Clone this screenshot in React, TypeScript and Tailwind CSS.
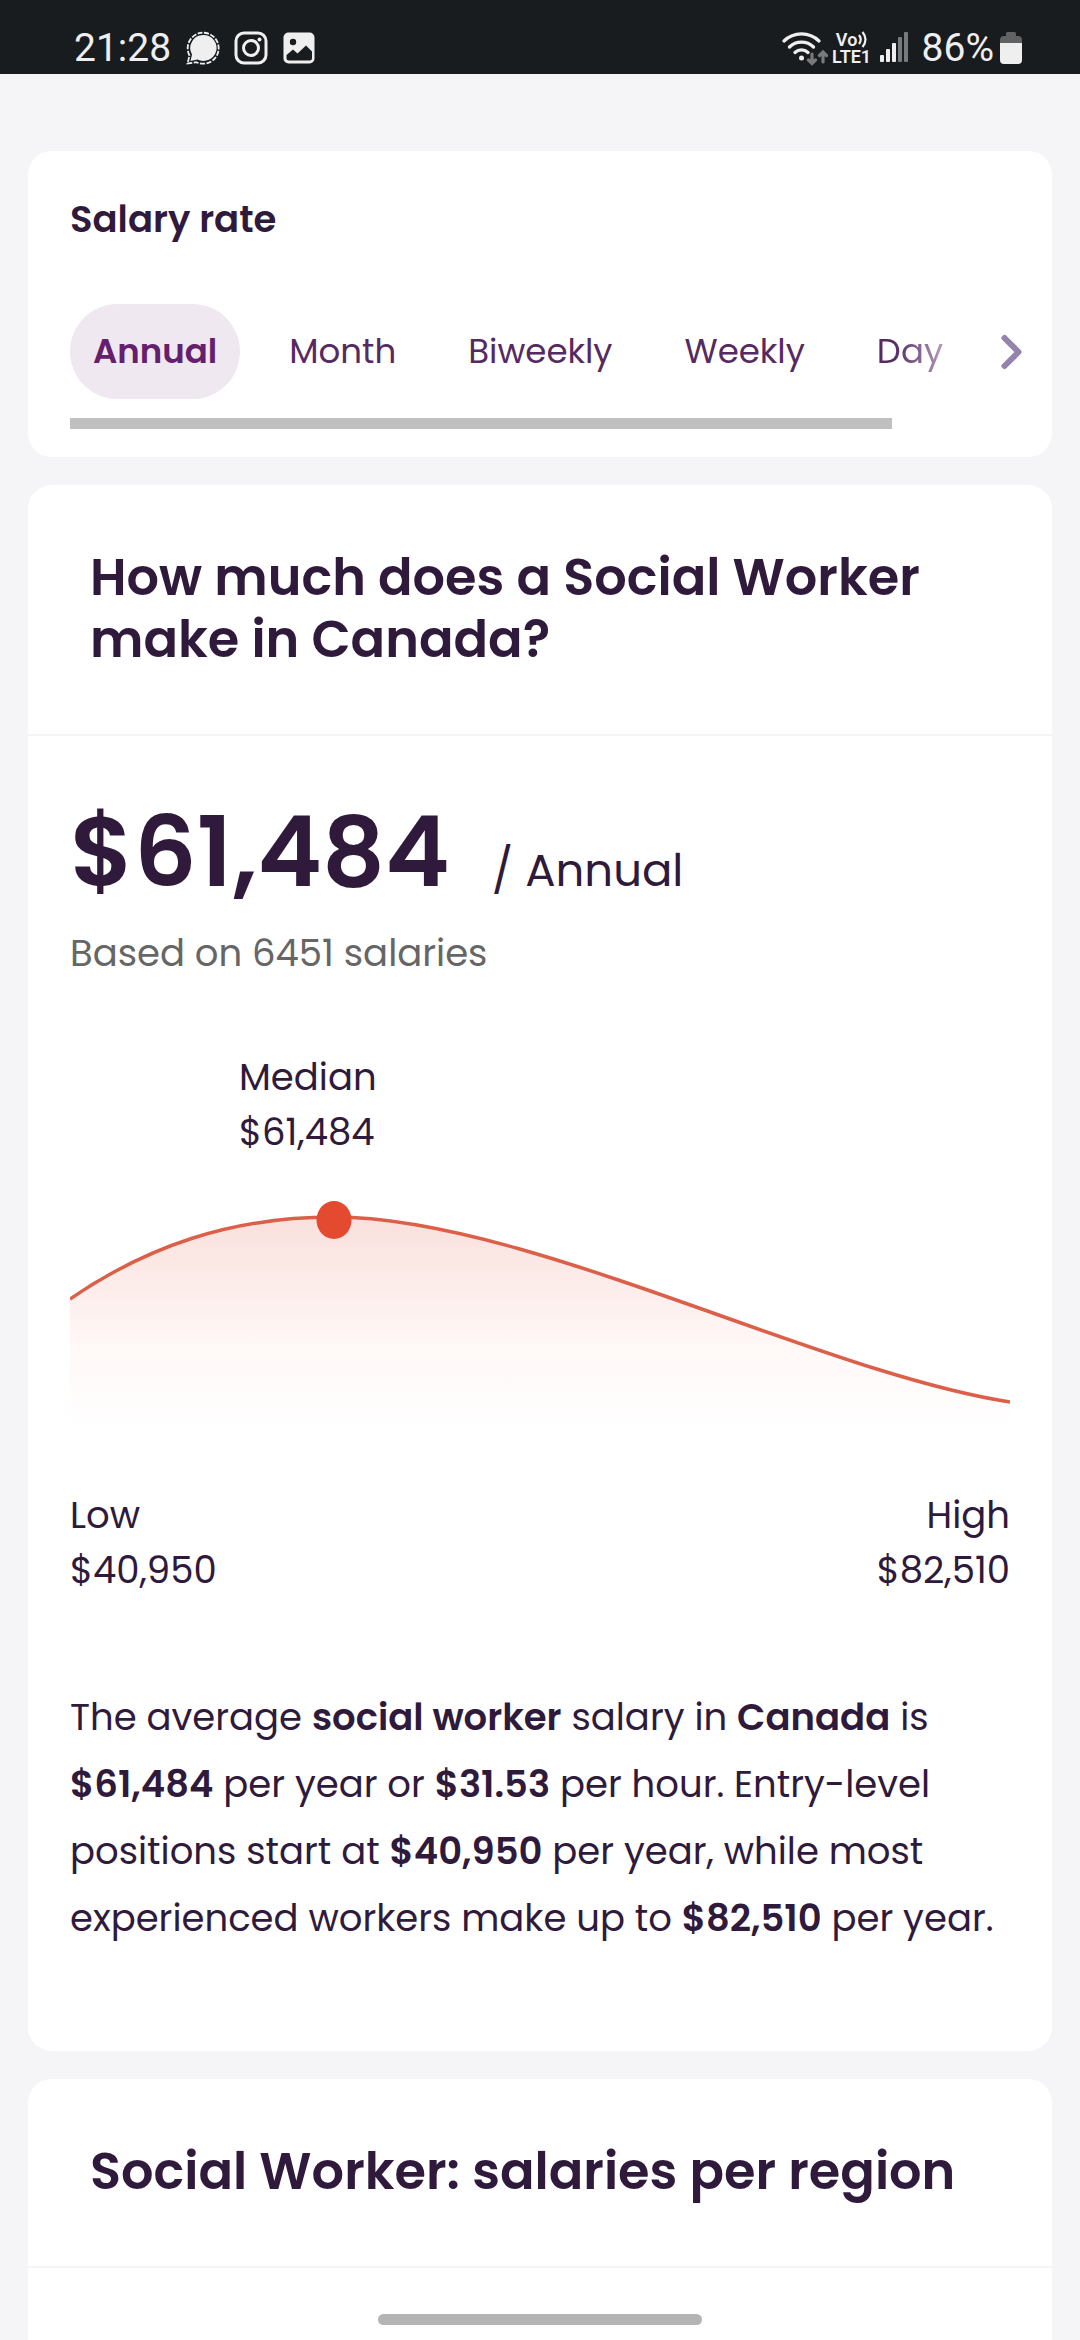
import { useState } from 'react';

const rates = ['Annual', 'Month', 'Biweekly', 'Weekly', 'Day'];

function StatusBar() {
  return (
    <header className="flex h-[74px] items-center justify-between bg-[#191c1f] px-[58px] pt-[22px] font-['Roboto',sans-serif] text-[#efefef]">
      <div className="flex items-center gap-[14px]">
        <span className="w-[98px] pl-4 text-[39px] leading-[48px]">21:28</span>
        {/* Chat bubble */}
        <svg className="ml-4 h-[34px] w-[34px]" viewBox="0 0 34 34" fill="none" stroke="currentColor">
          <path d="M17.500 4a13 13 0 1 1-6 24.500L4.500 30l1.500-6.500A13 13 0 0 1 17.500 4z" fill="currentColor" stroke="none" />
          <path d="M3.500 24.500A15.500 15.500 0 1 1 10.500 31.200L1.500 32.500z" strokeWidth="1.800" strokeDasharray="5 1.500" />
        </svg>
        {/* Camera */}
        <svg className="h-[34px] w-[34px]" viewBox="0 0 34 34" fill="none" stroke="currentColor" strokeWidth="3">
          <rect x="2" y="2" width="30" height="30" rx="8" />
          <circle cx="17" cy="17" r="7.500" />
          <circle cx="25.500" cy="8.500" r="2" fill="currentColor" stroke="none" />
        </svg>
        {/* Gallery */}
        <svg className="h-[34px] w-[34px]" viewBox="0 0 34 34">
          <rect x="1.500" y="1.500" width="31" height="31" rx="5" fill="currentColor" />
          <circle cx="11" cy="11" r="3.200" fill="#191c1f" />
          <path d="M4.500 24l6.500-5.500 4.500 4L24 14.500l6 6V27q0 2.500-2.500 2.500H7Q4.500 29.500 4.500 27z" fill="#191c1f" />
        </svg>
      </div>
      <div className="flex items-center">
        {/* Wi-Fi with traffic arrows */}
        <svg className="h-[36px] w-[46px]" viewBox="0 0 46 36" fill="none" stroke="currentColor" strokeWidth="3.200" strokeLinecap="round">
          <path d="M2 11a25 25 0 0 1 35 0M7.500 17a17 17 0 0 1 24 0M13 22.500a9.500 9.500 0 0 1 13 0" />
          <circle cx="19.500" cy="28" r="2.500" fill="currentColor" stroke="none" />
          <path d="M30 24v9M26.500 30l3.500 3.500 3.500-3.500M41 32v-9M37.500 25.500l3.500-3.500 3.500 3.500" stroke="#77797b" />
        </svg>
        {/* VoLTE */}
        <div className="ml-1 flex w-[40px] flex-col items-center text-[18px] leading-[17px] font-semibold">
          <span className="flex items-center">
            Vo
            <svg className="h-[17px] w-[10px]" viewBox="0 0 10 17" fill="none" stroke="currentColor" strokeWidth="2.200">
              <path d="M2 4q3.500 4.500 0 9M5.500 1q6 7.500 0 15" />
            </svg>
          </span>
          <span>LTE1</span>
        </div>
        <svg className="ml-[8px] h-[34px] w-[28px]" viewBox="0 0 28 34" fill="currentColor">
          <rect x="0" y="24" width="4" height="7" rx="1" />
          <rect x="6" y="18" width="4" height="13" rx="1" />
          <rect x="12" y="12" width="4" height="19" rx="1" />
          <rect x="18" y="6" width="4" height="25" rx="1" fill="#77797b" />
          <rect x="24" y="1" width="4" height="30" rx="1" fill="#77797b" />
        </svg>
        <span className="ml-[14px] text-[39px] leading-[48px]">86%</span>
        <svg className="ml-[6px] h-[32px] w-[22px]" viewBox="0 0 22 32">
          <path d="M6 4V1.500Q6 0 7.500 0h7Q16 0 16 1.500V4h2q4 0 4 4v3H0V8q0-4 4-4z" fill="#606264" />
          <path d="M0 11h22v17q0 4-4 4H4q-4 0-4-4z" fill="currentColor" />
        </svg>
      </div>
    </header>
  );
}

function SalaryCurve() {
  return (
    <svg className="block h-[250px] w-full" viewBox="0 0 940 250" preserveAspectRatio="none">
      <defs>
        <linearGradient id="fade" gradientUnits="userSpaceOnUse" x1="0" y1="26" x2="0" y2="240">
          <stop offset="0" stopColor="#f9e0dc" />
          <stop offset="0.600" stopColor="#fff8f7" />
          <stop offset="1" stopColor="#ffffff" />
        </linearGradient>
      </defs>
      <path d="M0 108C76 56 160 26 264 26C455 26 750 182 940 211V250H0z" fill="url(#fade)" />
      <path d="M0 108C76 56 160 26 264 26C455 26 750 182 940 211" fill="none" stroke="#db5f49" strokeWidth="3.500" />
      <ellipse cx="264" cy="29" rx="17.500" ry="19" fill="#e34a30" />
    </svg>
  );
}

export default function App() {
  const [active, setActive] = useState('Annual');

  return (
    <div className="relative flex min-h-screen flex-col bg-[#f5f5f8] font-['Poppins','Inter',sans-serif] text-[#2f1a3c]">
      <StatusBar />

      <main className="flex flex-1 flex-col gap-7 px-7 pt-[77px]">
        {/* Rate switcher */}
        <section className="rounded-3xl bg-white px-[42px] pt-[41px] pb-7">
          <h2 className="text-[37px] leading-[54px] font-semibold">Salary rate</h2>
          <div className="mt-[58px] -mr-5 flex items-center justify-between">
            <div className="flex min-w-0 flex-1 gap-[26px] overflow-hidden">
              {rates.map((rate) => (
                <button
                  key={rate}
                  onClick={() => setActive(rate)}
                  className={
                    rate === active
                      ? 'h-[95px] rounded-full bg-[#efe8f0] px-[23px] text-[34px] font-semibold text-[#64206c]'
                      : rate === 'Day'
                        ? 'h-[95px] bg-linear-to-r from-[#552a62] from-35% to-[#bfa9c5] to-85% bg-clip-text px-[23px] text-[34px] text-transparent'
                        : 'h-[95px] px-[23px] text-[34px] text-[#552a62]'
                  }
                >
                  {rate}
                </button>
              ))}
            </div>
            <button aria-label="Next rates" className="px-2">
              <svg className="h-9 w-[22px]" viewBox="0 0 22 36" fill="none" stroke="#9484ad" strokeWidth="6" strokeLinecap="round" strokeLinejoin="round">
                <path d="M4.500 4l14 14-14 14" />
              </svg>
            </button>
          </div>
          <div className="mt-[19px] h-[11px] w-[87.400%] bg-[#c0c0c0]" />
        </section>

        {/* Salary summary */}
        <section className="rounded-3xl bg-white">
          <h1 className="border-b-2 border-[#f5f5f8] px-[62px] pt-[61px] pb-16 text-[51px] leading-[62px] font-semibold">
            How much does a Social Worker make in Canada?
          </h1>
          <div className="px-[42px] pt-14 pb-[99px]">
            <div className="flex items-baseline gap-[42px]">
              <span className="text-[98px] leading-[120px] font-semibold">$61,484</span>
              <span className="text-[45px] leading-[67px]">/ Annual</span>
            </div>
            <p className="mt-[14px] text-[37px] leading-[54px] text-[#666666]">Based on 6451 salaries</p>
            <div className="mt-[70px] ml-[169px] text-[37px] leading-[55px]">
              <p>Median</p>
              <p>$61,484</p>
            </div>
            <div className="mt-[31px]">
              <SalaryCurve />
            </div>
            <div className="mt-[47px] flex justify-between text-[37px] leading-[55px]">
              <div>
                <p>Low</p>
                <p>$40,950</p>
              </div>
              <div className="text-right">
                <p>High</p>
                <p>$82,510</p>
              </div>
            </div>
            <p className="mt-[86px] text-[37px] leading-[67px]">
              The average <b className="font-semibold">social worker</b> salary in <b className="font-semibold">Canada</b> is{' '}
              <b className="font-semibold">$61,484</b> per year or <b className="font-semibold">$31.53</b> per hour. Entry-level
              positions start at <b className="font-semibold">$40,950</b> per year, while most experienced workers make up to{' '}
              <b className="font-semibold">$82,510</b> per year.
            </p>
          </div>
        </section>

        {/* Regions */}
        <section className="flex-1 rounded-t-3xl bg-white">
          <h2 className="border-b-2 border-[#f5f5f8] px-[62px] pt-[61px] pb-16 text-[51px] leading-[62px] font-semibold">
            Social Worker: salaries per region
          </h2>
        </section>
      </main>

      {/* Gesture bar */}
      <div className="absolute bottom-[15px] left-[35%] h-[11px] w-[30%] rounded-full bg-[#b4b4b4]" />
    </div>
  );
}
